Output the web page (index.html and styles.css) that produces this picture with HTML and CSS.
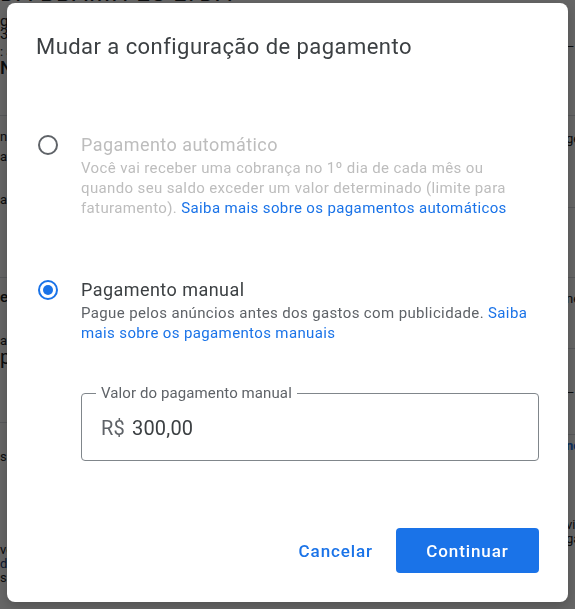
FILE: index.html
```html
<!DOCTYPE html>
<html lang="pt-BR">
<head>
<meta charset="utf-8">
<title>Mudar a configuração de pagamento</title>
<link rel="stylesheet" href="styles.css">
</head>
<body>
<div class="page">
  <div class="col col-left">
    <section class="sec sec-l1">
      <h2 class="pg-title">DA BBAIIIH ES LTDA</h2>
      <p class="t15 m8">gerenciador de contas</p>
      <p class="t15">321-456-7890</p>
      <p class="t13 m4">: ativo</p>
      <p class="t18">Nome da conta</p>
    </section>
    <section class="sec sec-l2">
      <p class="t13">nome do perfil</p>
      <p class="t13 m6">atualizado</p>
      <p class="t13 m29">a pagar</p>
    </section>
    <section class="sec sec-l3">
      <p class="t14b">es de pagamento</p>
      <p class="t13 m28">atual</p>
      <p class="t18b">pagamento</p>
    </section>
    <section class="sec-l4">
      <p class="t13">saldo</p>
      <p class="t13s m79">ver detalhes</p>
      <p class="t13s link-dim">documentos</p>
      <p class="t13s">saldo</p>
    </section>
  </div>
  <div class="col col-right">
    <section class="sec sec-r1"><p class="t13">–</p></section>
    <section class="sec sec-r2"><p class="t13">gerenciar</p></section>
    <section class="sec sec-r3"></section>
    <section class="sec sec-r4"><p class="t13">nenhum</p></section>
    <section class="sec sec-r5"><p class="t13">–</p></section>
    <section class="sec-r6">
      <p class="t13 link-b">nova</p>
      <p class="t13s m64">visualizar</p>
      <p class="t13s">gastos</p>
    </section>
  </div>
</div>

<div class="scrim"></div>

<div class="dialog" role="dialog" aria-labelledby="dlg-title">
  <h1 class="dlg-title" id="dlg-title">Mudar a configuração de pagamento</h1>

  <div class="option option-auto is-disabled">
    <span class="radio"></span>
    <div class="opt-body">
      <div class="opt-title">Pagamento automático</div>
      <div class="opt-desc">Você vai receber uma cobrança no 1º dia de cada mês ou<br>quando seu saldo exceder um valor determinado (limite para<br>faturamento). <a class="link" href="#">Saiba mais sobre os pagamentos automáticos</a></div>
    </div>
  </div>

  <div class="option option-manual">
    <span class="radio is-checked"><span class="radio-dot"></span></span>
    <div class="opt-body">
      <div class="opt-title">Pagamento manual</div>
      <div class="opt-desc">Pague pelos anúncios antes dos gastos com publicidade. <a class="link" href="#">Saiba<br>mais sobre os pagamentos manuais</a></div>
    </div>
  </div>

  <fieldset class="field">
    <legend class="field-label">Valor do pagamento manual</legend>
    <div class="field-value"><span class="prefix">R$</span><span class="amount">300,00</span></div>
  </fieldset>

  <div class="actions">
    <button class="btn btn-text" type="button">Cancelar</button>
    <button class="btn btn-primary" type="button">Continuar</button>
  </div>
</div>
</body>
</html>
```

FILE: styles.css
```css
html, body {
  margin: 0;
  padding: 0;
  background: #ffffff;
  font-family: Roboto, "Liberation Sans", Arial, sans-serif;
  overflow: hidden;
}

/* ---------- background page ---------- */
.page {
  display: grid;
  grid-template-columns: 566px 1fr;
  height: 609px;
  overflow: hidden;
  color: #202124;
}
.col {
  display: flex;
  flex-direction: column;
  min-width: 0;
}
.col p, .col h2 {
  margin: 0;
  white-space: nowrap;
}
.sec {
  box-sizing: border-box;
  border-bottom: 1px solid #dadce0;
  flex: none;
}
.sec-l1 { height: 137px; margin-top: -21px; }
.sec-l2 { height: 162px; padding-top: 14px; }
.sec-l3 { height: 145px; padding-top: 11px; }
.sec-l4 { padding-top: 27px; }

.sec-r1 { height: 116px; padding-top: 40px; }
.sec-r2 { height: 92px; padding-top: 16px; }
.sec-r3 { height: 70px; }
.sec-r4 { height: 71px; padding-top: 14px; }
.sec-r5 { height: 86px; padding-top: 37px; }
.sec-r6 { padding-top: 4px; }

.pg-title {
  font-size: 24px;
  line-height: 28px;
  font-weight: 400;
  letter-spacing: 1px;
}
.t13 { font-size: 13px; line-height: 13px; }
.t15 { font-size: 15px; line-height: 13px; }
.t13s { font-size: 13px; line-height: 14px; }
.t18 { font-size: 18px; line-height: 19px; font-weight: 500; }
.t14b { font-size: 15px; line-height: 16px; font-weight: 500; }
.t18b { font-size: 20px; line-height: 20px; }
.m4 { margin-top: 4px !important; }
.m6 { margin-top: 7px !important; }
.m8 { margin-top: 8px !important; }
.m28 { margin-top: 29px !important; }
.m29 { margin-top: 30px !important; }
.m64 { margin-top: 66px !important; }
.m79 { margin-top: 80px !important; }
.link-dim { color: #1a3d7a; }
.link-b { color: #1a73e8; font-weight: 700; }

.scrim {
  position: fixed;
  inset: 0;
  background: rgba(0, 0, 0, 0.6);
}

/* ---------- dialog ---------- */
.dialog {
  position: absolute;
  left: 7px;
  top: 3px;
  width: 561px;
  height: 599px;
  box-sizing: border-box;
  padding: 30px 29px 0 29px;
  background: #ffffff;
  border-radius: 8px;
  box-shadow: 0 4px 12px rgba(0, 0, 0, 0.2);
  display: flex;
  flex-direction: column;
}

.dlg-title {
  margin: 0;
  font-size: 22px;
  line-height: 28px;
  font-weight: 400;
  color: #3c4043;
  letter-spacing: 0.45px;
}

.option {
  display: flex;
  align-items: flex-start;
  gap: 23px;
}
.option-auto { margin-top: 72px; }
.option-manual { margin-top: 60px; }

.radio {
  flex: none;
  width: 20px;
  height: 20px;
  box-sizing: border-box;
  margin: 2px 0 0 2px;
  border: 2px solid #5f6368;
  border-radius: 50%;
  display: flex;
  align-items: center;
  justify-content: center;
}
.radio.is-checked {
  border-color: #1a73e8;
}
.radio-dot {
  width: 10px;
  height: 10px;
  border-radius: 50%;
  background: #1a73e8;
}

.opt-body {
  min-width: 0;
}
.opt-title {
  font-size: 18px;
  line-height: 24px;
  color: #3c4043;
  letter-spacing: 0.45px;
}
.opt-desc {
  margin-top: 1px;
  font-size: 15px;
  line-height: 20px;
  color: #5f6368;
  letter-spacing: 0.37px;
  white-space: nowrap;
}
.is-disabled .opt-title,
.is-disabled .opt-desc {
  color: #bdbdbd;
}
.link {
  color: #1a73e8;
  text-decoration: none;
}

/* ---------- outlined field ---------- */
.field {
  margin: 40px 0 0 45px;
  padding: 13px 19px 20px 19px;
  border: 1px solid #80868b;
  border-radius: 4px;
  min-width: 0;
}
.field-label {
  margin-left: -5px;
  padding: 0 5px;
  font-size: 15px;
  line-height: 20px;
  color: #5f6368;
  letter-spacing: 0.1px;
}
.field-value {
  font-size: 20px;
  line-height: 24px;
  display: flex;
  gap: 7px;
  letter-spacing: 0.2px;
}
.prefix { color: #5f6368; }
.amount { color: #3c4043; }

/* ---------- actions ---------- */
.actions {
  margin-top: 67px;
  display: flex;
  justify-content: flex-end;
  gap: 11px;
}
.btn {
  font-family: Roboto, "Liberation Sans", Arial, sans-serif;
  font-size: 17px;
  font-weight: 500;
  height: 45px;
  border: none;
  border-radius: 4px;
  cursor: pointer;
  letter-spacing: 0.9px;
}
.btn-text {
  background: transparent;
  color: #1a73e8;
  padding: 0 12px;
}
.btn-primary {
  background: #1a73e8;
  color: #ffffff;
  width: 143px;
  padding: 0;
}
```
